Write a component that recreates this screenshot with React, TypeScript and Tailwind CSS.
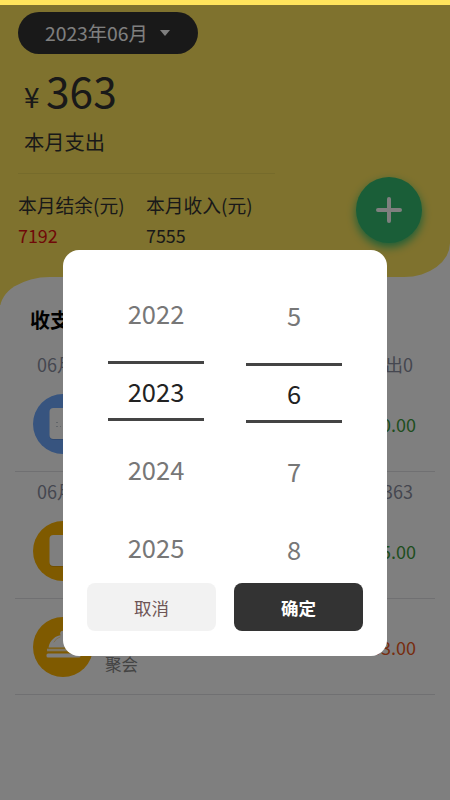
import React, { useState } from 'react';

type IconKind = 'note' | 'card' | 'dish';

interface BillItem {
  id: number;
  icon: IconKind;
  color: string;
  name: string;
  amount: string;
  amountColor: string;
}

interface BillDay {
  date: string;
  summary: string;
  items: BillItem[];
}

const days: BillDay[] = [
  {
    date: '06月18日',
    summary: '收入0 支出0',
    items: [{ id: 1, icon: 'note', color: 'bg-[#6ea8ff]', name: '', amount: '0.00', amountColor: 'text-[#3f9c40]' }],
  },
  {
    date: '06月17日',
    summary: '支出363',
    items: [
      { id: 2, icon: 'card', color: 'bg-[#ffb400]', name: '', amount: '5.00', amountColor: 'text-[#3f9c40]' },
      { id: 3, icon: 'dish', color: 'bg-[#ffb400]', name: '聚会', amount: '363.00', amountColor: 'text-[#ee5a22]' },
    ],
  },
];

const BillIcon: React.FC<{ kind: IconKind }> = ({ kind }) => {
  if (kind === 'dish') {
    return (
      <svg viewBox="0 0 60 60" className="size-[60px]">
        <circle cx="30" cy="16.500" r="2.8" fill="#fff" />
        <path d="M15.500 30.500c1-7 7-12.500 14.500-12.500s13.500 5.500 14.500 12.500z" fill="#fff" />
        <path d="M21 25q2-4 6-5" fill="none" stroke="#ffe09a" strokeWidth="1" strokeLinecap="round" />
        <path d="M14 33h32" stroke="#ffeec4" strokeWidth="2.6" />
        <rect x="13.5" y="36.5" width="34" height="4" rx="1.5" fill="#fff" />
      </svg>
    );
  }
  return (
    <svg viewBox="0 0 60 60" className="size-[60px]">
      <rect x="16.5" y="15" width="28" height="31" rx="4" fill="#000" opacity="0.12" />
      <rect x="16.5" y="14" width="28" height="31" rx="4" fill="#fff" />
      {kind === 'note' && (
        <path d="M23 28.500h2M23 32.500h2M27 32.500h1M31 28.500h8M31 32.500h8" stroke="#c4ccd4" strokeWidth="1.2" />
      )}
    </svg>
  );
};

interface PickerColumnProps {
  values: number[];
  selected: number;
  onSelect: (value: number) => void;
  className: string;
}

const PickerColumn: React.FC<PickerColumnProps> = ({ values, selected, onSelect, className }) => (
  <div className={`flex w-24 flex-col text-[25.5px] ${className}`}>
    {values.map((value) => (
      <div key={value} className="flex h-[78px] shrink-0 items-center">
        <button
          onClick={() => onSelect(value)}
          className={`h-[60px] w-full border-y-3 text-center ${
            value === selected ? 'border-[#444] text-[#222]' : 'border-transparent text-[#777]'
          }`}
        >
          {value}
        </button>
      </div>
    ))}
  </div>
);

const App: React.FC = () => {
  const [year, setYear] = useState(2023);
  const [month, setMonth] = useState(6);
  const [open, setOpen] = useState(true);

  return (
    <div className="relative h-[800px] w-[450px] overflow-hidden bg-[#ffe45c] font-['Noto_Sans_CJK_SC',sans-serif] leading-none">
      <div className="h-[305px] bg-white">
        <header className="flex h-[277px] flex-col rounded-br-[46px_34px] bg-[#ffe45c] px-[18px] pt-3">
          <button
            onClick={() => setOpen(true)}
            className="flex h-[42px] w-[180px] items-center gap-3 rounded-full bg-[#333] pl-[27px] text-[19.3px] text-white"
          >
            <span className="pt-0.5">2023年06月</span>
            <svg viewBox="0 0 10 6" className="h-1.5 w-2.5">
              <path d="M0 0h10L5 6z" fill="#fff" />
            </svg>
          </button>
          <div className="mt-[15px] flex h-11 items-baseline pl-1.5 text-[#333]">
            <span className="w-[22px] text-[28px]">¥</span>
            <span className="text-[42.5px]">363</span>
          </div>
          <div className="mt-[18px] pl-1.5 text-[20.3px] text-[#333]">本月支出</div>
          <div className="mt-[22px] w-[257px] border-t border-[#ecd657]" />
          <div className="flex justify-between">
            <div className="flex gap-[21px] pt-[22px] text-[18.8px] text-[#333]">
              <div>
                <div className="w-[107px] whitespace-nowrap">本月结余(元)</div>
                <div className="mt-3 text-[17.9px] text-[#e01010]">7192</div>
              </div>
              <div>
                <div className="w-[107px] whitespace-nowrap">本月收入(元)</div>
                <div className="mt-3 text-[17.9px]">7555</div>
              </div>
            </div>
            <button className="mt-[3px] mr-[10px] flex size-[66px] items-center justify-center rounded-full bg-[#34bc70] shadow-[0_4px_10px_#34bc70]">
              <svg viewBox="0 0 26 26" className="size-[26px]">
                <path d="M13 2v22M2 13h22" stroke="#fff" strokeWidth="4" strokeLinecap="round" />
              </svg>
            </button>
          </div>
        </header>
        <div className="h-10 bg-[#ffe45c]">
          <div className="h-10 rounded-tl-[50px_32px] bg-white" />
        </div>
      </div>

      <main className="h-[495px] bg-white px-[15px]">
        <h2 className="pt-[5px] pl-[15px] text-[20px] font-bold text-black">收支明细</h2>
        <div className="pt-[15px]">
          {days.map((day) => (
            <section key={day.date}>
              <div className="flex h-[31px] items-end justify-between pr-[22px] pb-[3px] pl-[22px] text-[18px] text-[#8a8ea0]">
                <span>{day.date}</span>
                <span>{day.summary}</span>
              </div>
              {day.items.map((item) => (
                <div key={item.id} className="flex h-24 items-center border-b border-[#e0e0e4] pr-[19px] pl-[18px]">
                  <div className={`size-[60px] rounded-full ${item.color}`}>
                    <BillIcon kind={item.icon} />
                  </div>
                  <div className="ml-3 flex-1 pt-9 text-[16.5px] text-[#888]">{item.name}</div>
                  <div className={`text-[18px] ${item.amountColor}`}>{item.amount}</div>
                </div>
              ))}
            </section>
          ))}
        </div>
      </main>

      {open && (
        <div className="absolute inset-0 border-t-[5px] border-[#ffe45c] bg-black/50 bg-clip-padding pt-[245px]">
          <div className="mx-auto flex h-[405.500px] w-[324px] flex-col rounded-2xl bg-white px-6 pt-6">
            <div className="flex h-[309px] justify-center gap-[42px] overflow-hidden">
              <PickerColumn values={[2022, 2023, 2024, 2025]} selected={year} onSelect={setYear} className="" />
              <PickerColumn values={[5, 6, 7, 8]} selected={month} onSelect={setMonth} className="pt-0.5" />
            </div>
            <div className="flex gap-[18px] text-[17.5px]">
              <button onClick={() => setOpen(false)} className="h-12 flex-1 rounded-lg bg-[#f2f2f2] pt-0.5 text-[#6e5555]">
                取消
              </button>
              <button onClick={() => setOpen(false)} className="h-12 flex-1 rounded-lg bg-[#333] pt-0.5 font-bold text-white">
                确定
              </button>
            </div>
          </div>
        </div>
      )}
    </div>
  );
};

export default App;
